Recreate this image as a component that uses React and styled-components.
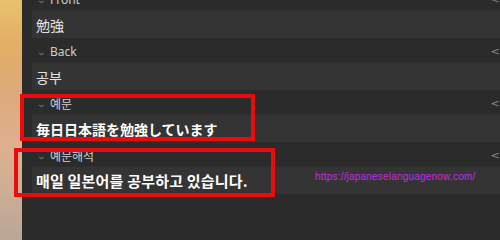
import React from "react";
import styled, { createGlobalStyle } from "styled-components";

const Global = createGlobalStyle`
  html, body { margin: 0; padding: 0; background: #2b2b2b; }
  body { font-family: "Noto Sans", "Noto Sans CJK KR", "Noto Sans CJK JP", sans-serif; }
`;

const Page = styled.div`
  position: relative;
  display: flex;
  width: 500px;
  height: 240px;
  overflow: hidden;
  background: #2b2b2b;
`;

const SideStrip = styled.div`
  flex: 0 0 22px;
  background: linear-gradient(
    180deg,
    #e9c26d 0%,
    #e2ae66 18%,
    #dcaa7c 40%,
    #dfb08e 60%,
    #cfae95 78%,
    #b9a697 100%
  );
`;

const Editor = styled.div`
  flex: 1;
  display: flex;
  flex-direction: column;
  margin-top: -14px;
  padding-left: 10px;
  background: #2b2b2b;
`;

const LabelRow = styled.div`
  height: 24px;
  display: flex;
  align-items: center;
  padding-left: 6px;
  padding-top: 3px;
  box-sizing: border-box;
  color: #cfcfcf;
  font-size: 12px;
`;

const Chevron = styled.span`
  width: 12px;
  color: #7a7a7a;
  font-size: 9px;
  transform: scaleX(1.4);
`;

const LabelText = styled.span`
  flex: 1;
`;

const HtmlToggle = styled.span`
  color: #8a8a8a;
  font-size: 11px;
  font-family: "DejaVu Sans", sans-serif;
  margin-right: -9px;
  letter-spacing: 0px;
`;

const Field = styled.div`
  height: 28px;
  box-sizing: border-box;
  display: flex;
  align-items: center;
  padding-left: 4px;
  background: #343434;
  border-top: 1px solid #2e2e2e;
  color: ${(p) => (p.$bold ? "#ffffff" : "#e4e4e4")};
  font-size: ${(p) => (p.$lang === "ko" && p.$bold ? "15px" : "14px")};
  letter-spacing: ${(p) => (p.$lang === "ko" && p.$bold ? "0.2px" : "0")};
  font-weight: ${(p) => (p.$bold ? 700 : 400)};
  font-family: ${(p) =>
    p.$lang === "ko"
      ? `"Noto Sans CJK KR", sans-serif`
      : `"Noto Sans CJK JP", sans-serif`};
  white-space: nowrap;
`;

const Highlight = styled.div`
  position: absolute;
  left: ${(p) => p.$x}px;
  top: ${(p) => p.$y}px;
  width: ${(p) => p.$w}px;
  height: ${(p) => p.$h}px;
  box-sizing: border-box;
  border: 4px solid #ec0a0a;
  pointer-events: none;
`;

const Watermark = styled.div`
  position: absolute;
  left: 315px;
  top: 171px;
  color: #c62ae6;
  font-family: "Liberation Sans", Arial, sans-serif;
  font-size: 10px;
  letter-spacing: 0.2px;
`;

const fields = [
  { label: "Front", value: "勉強", lang: "ja" },
  { label: "Back", value: "공부", lang: "ko" },
  { label: "예문", value: "毎日日本語を勉強しています", lang: "ja", bold: true },
  { label: "예문해석", value: "매일 일본어를 공부하고 있습니다.", lang: "ko", bold: true },
];

export default function App() {
  return (
    <>
      <Global />
      <Page>
        <SideStrip />
        <Editor>
          {fields.map((f) => (
            <React.Fragment key={f.label}>
              <LabelRow>
                <Chevron>⌄</Chevron>
                <LabelText>{f.label}</LabelText>
                <HtmlToggle>&lt;&gt;</HtmlToggle>
              </LabelRow>
              <Field $bold={f.bold} $lang={f.lang}>
                {f.value}
              </Field>
            </React.Fragment>
          ))}
        </Editor>
        <Highlight $x={20} $y={94} $w={235} $h={47} />
        <Highlight $x={14} $y={148} $w={261} $h={49} />
        <Watermark>https://japaneselanguagenow.com/</Watermark>
      </Page>
    </>
  );
}
